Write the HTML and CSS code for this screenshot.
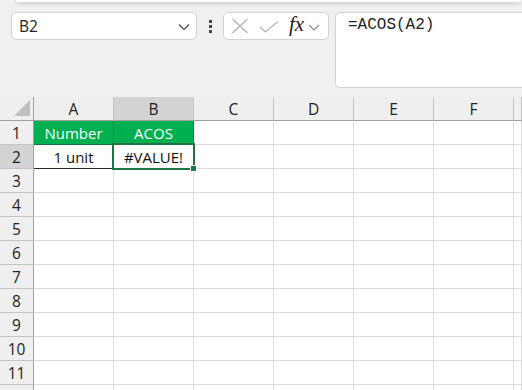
FILE: index.html
```html
<!DOCTYPE html>
<html>
<head>
<meta charset="utf-8">
<link rel="stylesheet" href="styles.css">
</head>
<body>
<div class="topstrip"></div>
<div class="toolbar">
  <div class="namebox">
    <span class="nametext">B2</span>
    <svg class="chev" width="12" height="8" viewBox="0 0 12 8"><path d="M1 1.5 L6 6.5 L11 1.5" fill="none" stroke="#444" stroke-width="1.2"/></svg>
  </div>
  <div class="dots"><i></i><i></i><i></i></div>
  <div class="fxbox">
    <svg class="ic-x" width="18" height="16" viewBox="0 0 18 16"><path d="M1.5 1 L16.5 15 M16.5 1 L1.5 15" stroke="#b4b4b4" stroke-width="1.3" fill="none"/></svg>
    <svg class="ic-check" width="20" height="12" viewBox="0 0 20 12"><path d="M1 6 L6.5 11 L19 0.5" stroke="#b4b4b4" stroke-width="1.3" fill="none"/></svg>
    <span class="fx">fx</span>
    <svg class="chev2" width="12" height="7" viewBox="0 0 12 7"><path d="M1 1 L6 6 L11 1" fill="none" stroke="#888" stroke-width="1.1"/></svg>
  </div>
  <div class="formula">=ACOS(A2)</div>
</div>
<div class="sheet">
  <div class="corner"><svg width="18" height="18" viewBox="0 0 18 18"><path d="M0 16 L16 16 L16 0 Z" fill="#bfbfbf"/></svg></div>
  <div class="ch">A</div><div class="ch sel">B</div><div class="ch">C</div><div class="ch">D</div><div class="ch">E</div><div class="ch">F</div><div class="ch last"></div>

  <div class="rh">1</div>
  <div class="c hd">Number</div><div class="c hd">ACOS</div><div class="c"></div><div class="c"></div><div class="c"></div><div class="c"></div><div class="c"></div>

  <div class="rh sel">2</div>
  <div class="c dt">1 unit</div><div class="c dt">#VALUE!</div><div class="c"></div><div class="c"></div><div class="c"></div><div class="c"></div><div class="c"></div>

  <div class="rh">3</div><div class="c"></div><div class="c"></div><div class="c"></div><div class="c"></div><div class="c"></div><div class="c"></div><div class="c"></div>
  <div class="rh">4</div><div class="c"></div><div class="c"></div><div class="c"></div><div class="c"></div><div class="c"></div><div class="c"></div><div class="c"></div>
  <div class="rh">5</div><div class="c"></div><div class="c"></div><div class="c"></div><div class="c"></div><div class="c"></div><div class="c"></div><div class="c"></div>
  <div class="rh">6</div><div class="c"></div><div class="c"></div><div class="c"></div><div class="c"></div><div class="c"></div><div class="c"></div><div class="c"></div>
  <div class="rh">7</div><div class="c"></div><div class="c"></div><div class="c"></div><div class="c"></div><div class="c"></div><div class="c"></div><div class="c"></div>
  <div class="rh">8</div><div class="c"></div><div class="c"></div><div class="c"></div><div class="c"></div><div class="c"></div><div class="c"></div><div class="c"></div>
  <div class="rh">9</div><div class="c"></div><div class="c"></div><div class="c"></div><div class="c"></div><div class="c"></div><div class="c"></div><div class="c"></div>
  <div class="rh">10</div><div class="c"></div><div class="c"></div><div class="c"></div><div class="c"></div><div class="c"></div><div class="c"></div><div class="c"></div>
  <div class="rh">11</div><div class="c"></div><div class="c"></div><div class="c"></div><div class="c"></div><div class="c"></div><div class="c"></div><div class="c"></div>
  <div class="rh"></div><div class="c"></div><div class="c"></div><div class="c"></div><div class="c"></div><div class="c"></div><div class="c"></div><div class="c"></div>

  <div class="selection"></div>
  <div class="handle"></div>
</div>
</body>
</html>
```

FILE: styles.css
```css
* { box-sizing: border-box; }
html, body {
  margin: 0;
  padding: 0;
  width: 522px;
  height: 390px;
  overflow: hidden;
  background: #f0f0f0;
  font-family: "Open Sans", "Noto Sans", sans-serif;
  color: #1a1a1a;
}
.topstrip {
  height: 2px;
  margin: 0 1px 0 16px;
  background: #fff;
  box-shadow: 0 1px 4px rgba(0,0,0,0.28);
}
.toolbar {
  height: 95px;
  display: flex;
  align-items: flex-start;
  padding: 10px 0 0 11px;
}
.namebox {
  width: 186px;
  height: 28px;
  background: #fff;
  border: 1px solid #d2d2d2;
  border-radius: 5px;
  display: flex;
  align-items: center;
  justify-content: space-between;
  padding: 0 6px 0 7px;
}
.nametext {
  font-size: 15.5px;
  color: #222;
}
.chev { margin-top: 2px; }
.dots {
  width: 26px;
  height: 28px;
  display: flex;
  flex-direction: column;
  align-items: center;
  justify-content: center;
  gap: 2px;
}
.dots i {
  display: block;
  width: 3px;
  height: 3px;
  background: #444;
}
.fxbox {
  width: 106px;
  height: 28px;
  background: #fff;
  border: 1px solid #d2d2d2;
  border-radius: 5px;
  display: flex;
  align-items: center;
  padding: 0 0 0 7px;
}
.ic-x { margin-right: 10px; }
.ic-check { margin-right: 10px; margin-top: 1px; }
.fx {
  font-family: "Liberation Serif", "DejaVu Serif", serif;
  font-style: italic;
  font-size: 21px;
  color: #222;
  margin-right: 4px;
  margin-top: -4px;
}
.chev2 { margin-top: 2px; }
.formula {
  margin-left: 6px;
  flex: 1;
  height: 76px;
  background: #fff;
  border: 1px solid #d2d2d2;
  border-right: none;
  border-radius: 5px 0 0 5px;
  padding: 3px 0 0 12px;
  font-family: "Liberation Mono", "DejaVu Sans Mono", monospace;
  font-size: 16px;
  color: #222;
}
.sheet {
  position: relative;
  display: grid;
  grid-template-columns: 34px repeat(6, 80px) 1fr;
  grid-auto-rows: 24px;
  overflow: hidden;
}
.corner {
  background: #efefef;
  border-right: 1px solid #a0a0a0;
  border-bottom: 1px solid #a0a0a0;
  display: flex;
  align-items: flex-end;
  justify-content: flex-end;
  padding: 0 1px 2px 0;
}
.ch {
  background: #efefef;
  border-right: 1px solid #c4c4c4;
  border-bottom: 1px solid #a0a0a0;
  display: flex;
  align-items: center;
  justify-content: center;
  font-size: 15.5px;
  color: #222;
}
.ch.sel { background: #d3d3d3; }
.rh {
  background: #efefef;
  border-right: 1px solid #a0a0a0;
  border-bottom: 1px solid #c4c4c4;
  display: flex;
  align-items: center;
  justify-content: center;
  font-size: 15.5px;
  color: #222;
}
.rh.sel { background: #d3d3d3; }
.c {
  background: #fff;
  border-right: 1px solid #dcdcdc;
  border-bottom: 1px solid #dcdcdc;
  display: flex;
  align-items: center;
  justify-content: center;
  font-size: 15px;
}
.c.hd {
  background: #00b050;
  color: #fff;
  border-right: 1px solid #1e7a45;
  border-bottom: 1px solid #1e6e40;
}
.c.dt {
  color: #111;
  border-right: 1px solid #2a2a2a;
  border-bottom: 1px solid #2a2a2a;
}
.selection {
  position: absolute;
  left: 112px;
  top: 46px;
  width: 83px;
  height: 27px;
  border: 2px solid #217346;
  pointer-events: none;
}
.handle {
  position: absolute;
  left: 190px;
  top: 68px;
  width: 7px;
  height: 7px;
  background: #217346;
  border: 1px solid #fff;
}
```
